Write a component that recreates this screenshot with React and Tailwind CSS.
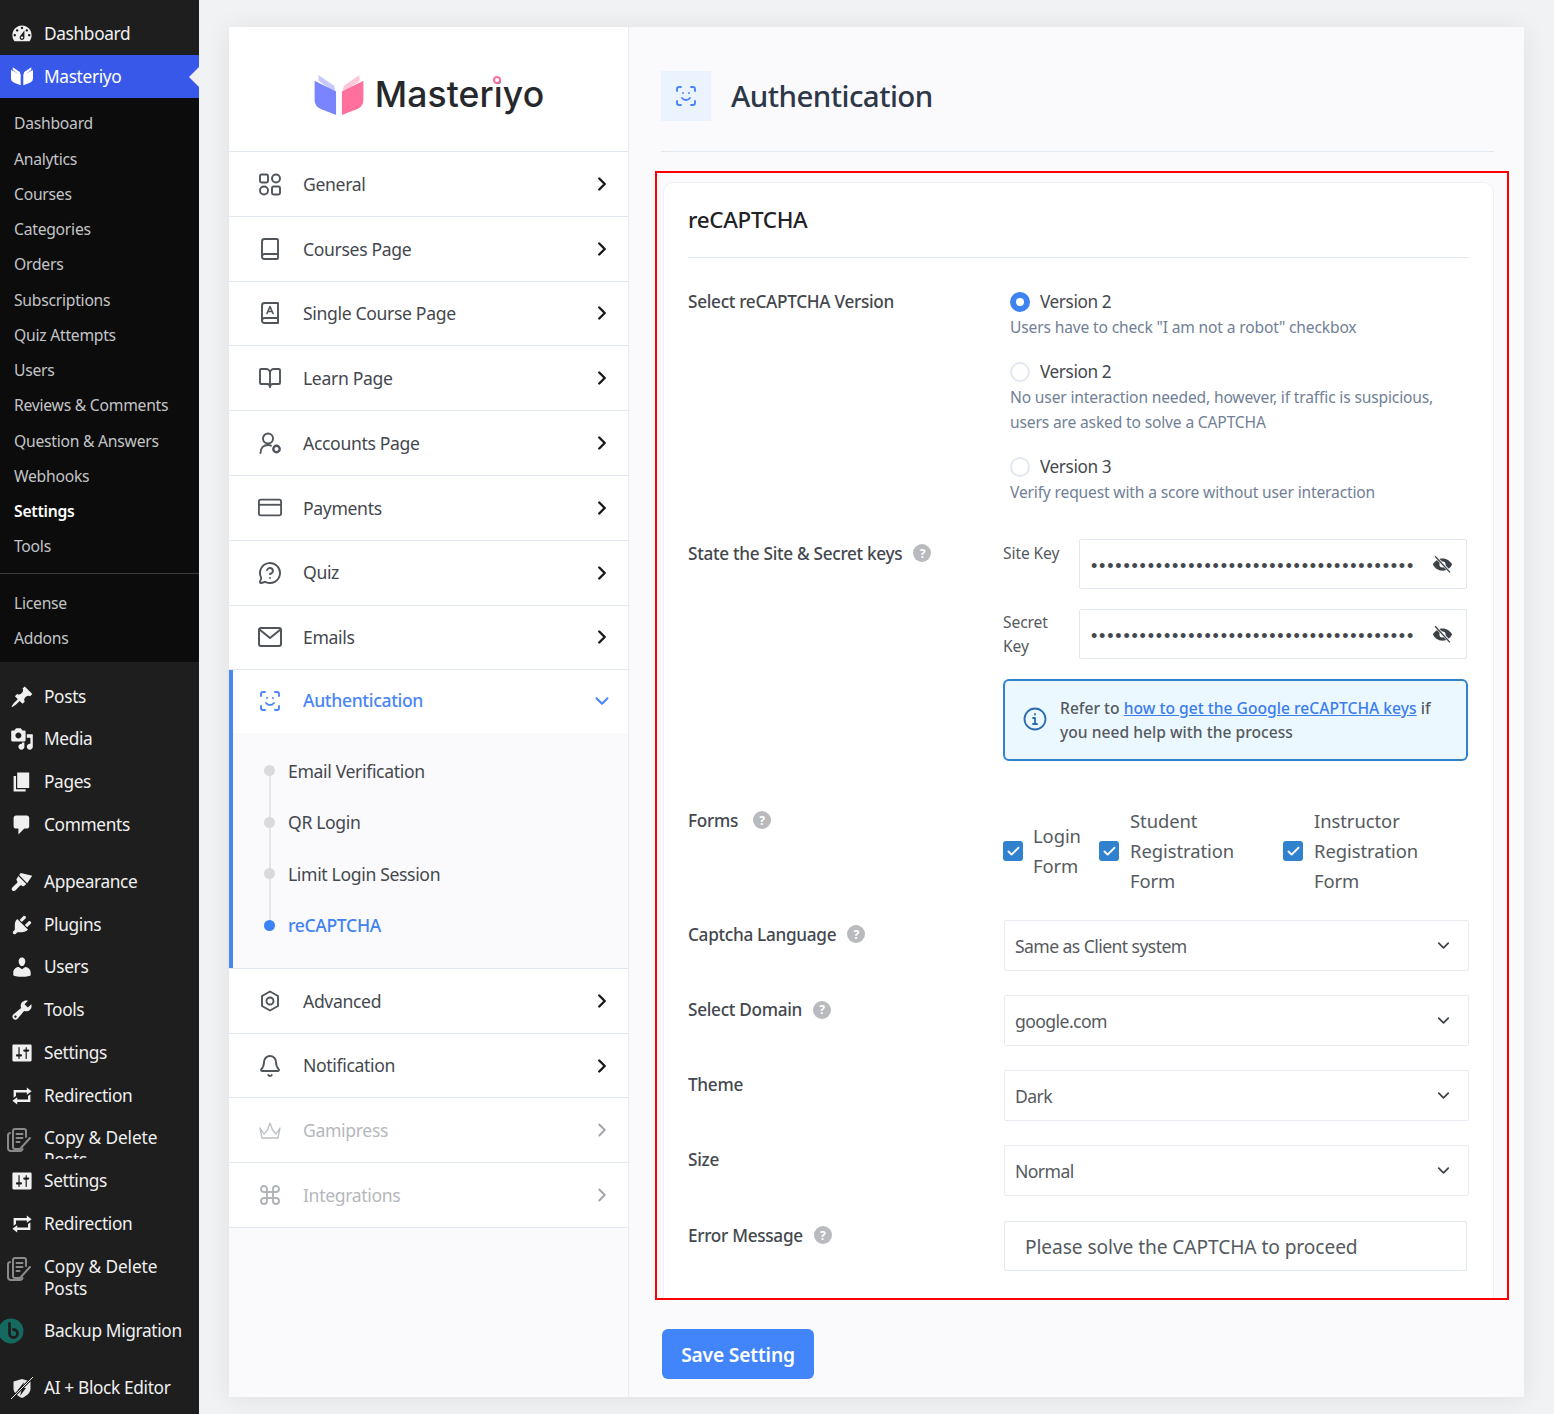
import React from "react";
import { ChevronRight, ChevronDown, Book, BookOpen, MessageCircleQuestion, Bell, Command, Check } from "lucide-react";

const Dash = ({ d, className = "w-[24px] h-[24px]" }) => (
  <svg viewBox="0 0 20 20" className={className} fill="currentColor"><path d={d} /></svg>
);
const D = {
  dashboard: "M3.76 16h12.48c1.1-1.37 1.76-3.11 1.76-5 0-4.42-3.58-8-8-8s-8 3.58-8 8c0 1.89.66 3.63 1.76 5zM10 4c.55 0 1 .45 1 1s-.45 1-1 1-1-.45-1-1 .45-1 1-1zM6 6c.55 0 1 .45 1 1s-.45 1-1 1-1-.45-1-1 .45-1 1-1zm8 0c.55 0 1 .45 1 1s-.45 1-1 1-1-.45-1-1 .45-1 1-1zm-5.37 5.55L12 7v6c0 1.1-.9 2-2 2s-2-.9-2-2c0-.57.24-1.08.63-1.45zM4 10c.55 0 1 .45 1 1s-.45 1-1 1-1-.45-1-1 .45-1 1-1zm12 0c.55 0 1 .45 1 1s-.45 1-1 1-1-.45-1-1 .45-1 1-1zm-5 3c0-.55-.45-1-1-1s-1 .45-1 1 .45 1 1 1 1-.45 1-1z",
  post: "M10.44 3.02l1.82-1.82 6.36 6.35-1.83 1.82c-1.05-.68-2.48-.57-3.41.36l-.75.75c-.92.93-1.04 2.35-.35 3.41l-1.83 1.82-2.41-2.41-2.8 2.79c-.42.42-3.38 2.71-3.8 2.29s1.86-3.39 2.28-3.81l2.79-2.79L4.1 9.36l1.83-1.82c1.05.69 2.48.57 3.4-.36l.75-.75c.93-.92 1.05-2.35.36-3.41z",
  media: "M13 11V4c0-.55-.45-1-1-1h-1.67L9 1H5L3.67 3H2c-.55 0-1 .45-1 1v7c0 .55.45 1 1 1h10c.55 0 1-.45 1-1zM7 4.5c1.38 0 2.5 1.12 2.5 2.5S8.38 9.5 7 9.5 4.5 8.38 4.5 7 5.62 4.5 7 4.5zM14 6h5v10.5c0 1.38-1.12 2.5-2.5 2.5S14 17.88 14 16.5s1.12-2.5 2.5-2.5c.17 0 .34.02.5.05V9h-3V6zm-4 8.05V13h2v3.5c0 1.38-1.12 2.5-2.5 2.5S7 17.88 7 16.5 8.12 14 9.5 14c.17 0 .34.02.5.05z",
  page: "M6 15V2h10v13H6zm-1 1h8v2H3V5h2v11z",
  comments: "M5 2h9c1.1 0 2 .9 2 2v7c0 1.1-.9 2-2 2h-2l-5 5v-5H5c-1.1 0-2-.9-2-2V4c0-1.1.9-2 2-2z",
  appearance: "M9 2.5l9.5 2.2-4.2 6.3L7.6 4.2zM6.9 4.9l6.7 6.8-1.6 1.5c-.6.6-1.4.4-2-.1-.5-.5-1.200-.4-1.700.1l-3.600 3.700c-.8.8-2 .9-2.800.1-.7-.8-.6-1.900.2-2.700l3.700-3.500c.5-.5.6-1.200.1-1.700-.6-.6-.8-1.400-.1-2z",
  plugins: "M13.11 4.36L9.87 7.6 8 5.73l3.24-3.24c.35-.34 1.05-.2 1.56.32.52.51.66 1.21.31 1.55zm-8 1.77l.91-1.12 9.01 9.01-1.19.84c-.71.71-2.63 1.16-3.82 1.16H6.14L4.9 17.26c-.59.59-1.54.59-2.12 0-.59-.58-.59-1.53 0-2.12l1.24-1.24v-3.88c0-1.13.4-3.19 1.09-3.89zm7.26 3.97l3.24-3.24c.34-.35 1.04-.21 1.55.31.52.51.66 1.21.31 1.55l-3.24 3.25z",
  users: "M10 9.25c-2.27 0-2.73-3.44-2.73-3.44C7 4.02 7.82 2 9.97 2c2.16 0 2.98 2.02 2.71 3.81 0 0-.41 3.44-2.68 3.44zm0 2.57L12.72 10c2.39 0 4.52 2.33 4.52 4.53v2.49s-3.65 1.13-7.24 1.13c-3.65 0-7.24-1.13-7.24-1.13v-2.49c0-2.25 1.94-4.48 4.47-4.48z",
  tools: "M16.68 9.77c-1.34 1.34-3.3 1.67-4.95.99l-5.41 6.52c-.99.99-2.59.99-3.58 0s-.99-2.59 0-3.57l6.52-5.42c-.68-1.65-.35-3.61.99-4.95 1.28-1.28 3.12-1.62 4.72-1.06l-2.89 2.89 2.82 2.82 2.86-2.87c.53 1.58.18 3.39-1.08 4.65zM3.81 16.21c.4.39 1.04.39 1.43 0 .4-.4.4-1.04 0-1.43-.39-.4-1.03-.4-1.43 0-.39.39-.39 1.03 0 1.43z",
  settings: "M18 16V4c0-.55-.45-1-1-1H3c-.55 0-1 .45-1 1v12c0 .55.45 1 1 1h14c.55 0 1-.45 1-1zM8 11h1c.55 0 1 .45 1 1s-.45 1-1 1H8v1.5c0 .28-.22.5-.5.5s-.5-.22-.5-.5V13H6c-.55 0-1-.45-1-1s.45-1 1-1h1V5.5c0-.28.22-.5.5-.5s.5.22.5.5V11zm5-2h-1c-.55 0-1-.45-1-1s.45-1 1-1h1V5.5c0-.28.22-.5.5-.5s.5.22.5.5V7h1c.55 0 1 .45 1 1s-.45 1-1 1h-1v5.5c0 .28-.22.5-.5.5s-.5-.22-.5-.5V9z",
  redirect: "M5 7v3l-2 1.5V5h11V3l4 3.01L14 9V7H5zm10 6v-3l2-1.5V15H6v2l-4-3.01L6 11v2h9z",
};

const BookLogo = ({ className, a = "#fff", b = "#fff", fa = "#fff", fb = "#fff" }) => (
  <svg viewBox="0 0 50 42" className={className}>
    <path d="M4 6 L4 0 L20 11 L22 19Z" fill={fa} />
    <path d="M46 6 L46 0 L30 11 L28 19Z" fill={fb} />
    <path d="M0 6 L22 17 V41 L7 35 Q0 32 0 26Z" fill={a} />
    <path d="M50 6 L28 17 V41 L43 35 Q50 32 50 26Z" fill={b} />
  </svg>
);

const CopyDel = () => (
  <svg viewBox="0 0 26 26" className="w-[26px] h-[26px]" fill="none" stroke="#8a8a8a" strokeWidth="2" strokeLinecap="round" strokeLinejoin="round">
    <path d="M7 20V4q0-2 2-2h9q2 0 2 2v6" />
    <path d="M4 6q-2 .500-2 2v13q0 3 3 3h9q2 0 2.500-2" />
    <path d="M10.500 7h6M10.500 11h6M10.500 15h3" />
    <path d="M7 20q0 2 2 2h5l10-11" />
  </svg>
);

const Backup = () => (
  <svg viewBox="0 0 26 26" className="w-[26px] h-[26px]" fill="none">
    <circle cx="12" cy="13" r="12.500" fill="#16695f" />
    <path d="M10.500 5.500v10a4 4 0 1 0 4-4" stroke="#1e1e1e" strokeWidth="2.800" strokeLinecap="round" />
  </svg>
);

const AiIcon = () => (
  <svg viewBox="0 0 24 24" className="w-[24px] h-[24px]">
    <path d="M12 3l8.500 2.500v7c0 4.500-4 7.500-8.500 9.500-4.500-2-8.500-5-8.500-9.500v-7z" fill="#e8e8e8" />
    <path d="M14 6l-6 8h3.500L10 20l6-8h-3.500z" fill="#1e1e1e" />
    <path d="M1 23L23 1" stroke="#1e1e1e" strokeWidth="2.500" />
    <path d="M1 23L23 1" stroke="#e8e8e8" strokeWidth="1" />
  </svg>
);

const WpText = ({ children }) => (
  <span className="text-[17.3px] leading-[22px] tracking-[-0.35px]">{children}</span>
);

const WpItem = ({ icon, children }) => (
  <div className="flex items-center h-[42.8px] shrink-0 text-[#f0f0f1]">
    <span className="w-[44px] shrink-0 flex justify-center text-[#f0f0f1]">{icon}</span>
    <WpText>{children}</WpText>
  </div>
);

const Sub = ({ children, bold }) => (
  <div className={`h-[35.25px] flex items-center pl-[14px] text-[15.7px] tracking-[-0.25px] ${bold ? "text-white font-semibold" : "text-[#c3c4c7]"}`}>{children}</div>
);

const Sidebar = () => (
  <aside className="w-[199px] h-[1414px] shrink-0 bg-[#1e1e1e] overflow-hidden pt-[12.5px]">
    <WpItem icon={<Dash d={D.dashboard} />}>Dashboard</WpItem>
    <div className="relative h-[43px] -mt-[0.3px] bg-[#3858e9] flex items-center text-white">
      <span className="w-[44px] flex justify-center"><BookLogo className="w-[22px] h-[19px]" /></span>
      <WpText>Masteriyo</WpText>
      <span className="absolute right-0 top-[12px] border-y-[10px] border-y-transparent border-r-[10px] border-r-[#f0f0f1]" />
    </div>
    <div className="bg-[#0c0c0c] h-[564px] pt-[8.5px]">
      {["Dashboard", "Analytics", "Courses", "Categories", "Orders", "Subscriptions", "Quiz Attempts", "Users", "Reviews & Comments", "Question & Answers", "Webhooks"].map((s) => <Sub key={s}>{s}</Sub>)}
      <Sub bold>Settings</Sub>
      <Sub>Tools</Sub>
      <div className="h-px bg-[#3c3c3c] mt-[8.5px] mb-[12px]" />
      <Sub>License</Sub>
      <Sub>Addons</Sub>
    </div>
    <div className="h-[13.2px]" />
    <WpItem icon={<Dash d={D.post} />}>Posts</WpItem>
    <WpItem icon={<Dash d={D.media} />}>Media</WpItem>
    <WpItem icon={<Dash d={D.page} />}>Pages</WpItem>
    <WpItem icon={<Dash d={D.comments} />}>Comments</WpItem>
    <div className="h-[14px]" />
    <WpItem icon={<Dash d={D.appearance} />}>Appearance</WpItem>
    <WpItem icon={<Dash d={D.plugins} />}>Plugins</WpItem>
    <WpItem icon={<Dash d={D.users} />}>Users</WpItem>
    <WpItem icon={<Dash d={D.tools} />}>Tools</WpItem>
    <WpItem icon={<Dash d={D.settings} />}>Settings</WpItem>
    <WpItem icon={<Dash d={D.redirect} />}>Redirection</WpItem>
    <div className="h-[42.3px] overflow-hidden flex items-start pt-[10px] text-[#f0f0f1]">
      <span className="w-[44px] shrink-0 flex justify-center -ml-[3px] mr-[3px]"><CopyDel /></span>
      <span className="text-[17.3px] leading-[22px] tracking-[-0.1px]">Copy &amp; Delete<br />Posts</span>
    </div>
    <WpItem icon={<Dash d={D.settings} />}>Settings</WpItem>
    <WpItem icon={<Dash d={D.redirect} />}>Redirection</WpItem>
    <div className="h-[64.5px] flex items-start pt-[11px] text-[#f0f0f1]">
      <span className="w-[44px] shrink-0 flex justify-center -ml-[3px] mr-[3px]"><CopyDel /></span>
      <span className="text-[17.3px] leading-[22px] tracking-[-0.1px]">Copy &amp; Delete<br />Posts</span>
    </div>
    <div className="h-[43px] flex items-center text-[#f0f0f1]">
      <span className="w-[44px] shrink-0 flex justify-start -ml-[1px] mr-[1px]"><Backup /></span>
      <WpText>Backup Migration</WpText>
    </div>
    <div className="h-[14.500px]" />
    <WpItem icon={<AiIcon />}>AI + Block Editor</WpItem>
  </aside>
);

const Ico = ({ children, className = "text-[#50555b]", sw = "1.9" }) => (
  <svg viewBox="0 0 24 24" className={`w-[24px] h-[24px] ${className}`} fill="none" stroke="currentColor" strokeWidth={sw} strokeLinecap="round" strokeLinejoin="round">{children}</svg>
);
const Face = ({ className }) => (
  <Ico className={className}>
    <path d="M3 7V5a2 2 0 0 1 2-2h2M17 3h2a2 2 0 0 1 2 2v2M21 17v2a2 2 0 0 1-2 2h-2M7 21H5a2 2 0 0 1-2-2v-2" />
    <path d="M8 14s1.500 2 4 2 4-2 4-2" />
    <path d="M9 9h.01M15 9h.01" />
  </Ico>
);
const icons = {
  general: <Ico><rect x="2" y="2.500" width="8" height="8" rx="1.500" /><circle cx="18" cy="6.500" r="4" /><circle cx="6" cy="18.500" r="4" /><rect x="14" y="14.500" width="8" height="8" rx="1.500" /></Ico>,
  courses: <Book size={24} strokeWidth={1.9} className="text-[#50555b]" />,
  single: <Ico><path d="M4 19.500v-15A2.500 2.500 0 0 1 6.500 2H20v20H6.500a2.500 2.500 0 0 1-2.500-2.500z" /><path d="M4 19.500A2.500 2.500 0 0 1 6.500 17H20" /><path d="M9 12.500l3-7 3 7M10 10.500h4" strokeWidth="1.600" /></Ico>,
  learn: <BookOpen size={24} strokeWidth={1.9} className="text-[#50555b]" />,
  accounts: <Ico><circle cx="10" cy="7.500" r="5" /><path d="M2.500 22c0-5 3-8 7.500-8 1.200 0 2 .200 3 .600" /><circle cx="18.500" cy="18" r="3.200" strokeWidth="2.400" /></Ico>,
  payments: <svg viewBox="0 0 26 20" className="w-[26px] h-[20px] text-[#50555b]" fill="none" stroke="currentColor" strokeWidth="2"><rect x="1" y="1" width="24" height="17" rx="2" /><path d="M1 6.500h24" /></svg>,
  quiz: <MessageCircleQuestion size={24} strokeWidth={1.9} className="text-[#50555b]" />,
  emails: <svg viewBox="0 0 24 20" className="w-[24px] h-[20px] text-[#50555b]" fill="none" stroke="currentColor" strokeWidth="2" strokeLinejoin="round"><rect x="1" y="1" width="22" height="18" rx="2" /><path d="M1.500 2.500L12 11l10.500-8.500" /></svg>,
  auth: <Face className="text-[#4a85f6]" />,
  advanced: <Ico><path d="M12 2.500l8 4.500v10l-8 4.500-8-4.500V7z" /><circle cx="12" cy="12" r="3.500" /></Ico>,
  notify: <Bell size={24} strokeWidth={1.9} className="text-[#50555b]" />,
  gami: <Ico className="text-[#bcc0c4]" sw="1.300"><path d="M2 10l4 6 3.500-4L12 5l2.500 7 3.500 4 4-6-2 10H4z" /></Ico>,
  integ: <Command size={24} strokeWidth={1.9} className="text-[#b0b4b8]" />,
};

const NavRow = ({ icon, label, muted }) => (
  <div className="h-[64.8px] flex items-center border-b border-[#e2e8f0] bg-white">
    <span className="w-[24px] ml-[29px] mr-[21px] flex justify-center shrink-0">{icon}</span>
    <span className={`flex-1 text-[17.6px] tracking-[-0.35px] ${muted ? "text-[#b5b8bc]" : "text-[#44484e]"}`}>{label}</span>
    <ChevronRight size={22} strokeWidth={muted ? 2 : 2.6} className={`mr-[15px] ${muted ? "text-[#a0a4a8]" : "text-[#16181b]"}`} />
  </div>
);

const SubNav = ({ children, active, last }) => (
  <div className="relative h-[51.4px] flex items-center pl-[55px]">
    {!last && <span className="absolute left-[36px] top-[25px] h-[52px] w-[1.5px] bg-[#e2e5ea]" />}
    <span className={`absolute left-[31px] top-[20px] w-[11px] h-[11px] rounded-full ${active ? "bg-[#3b82f6]" : "bg-[#d8dade]"}`} />
    <span className={`text-[17.6px] tracking-[-0.35px] ${active ? "text-[#3f83f0] font-medium" : "text-[#44484e]"}`}>{children}</span>
  </div>
);

const LeftNav = () => (
  <nav className="w-[400px] shrink-0 border-r border-[#e8ebf0] bg-[#fafafc]">
    <div className="h-[125px] bg-white border-b border-[#e2e8f0] flex items-center justify-center pl-[1px] pt-[12px]">
      <BookLogo className="w-[50px] h-[41px] mr-[11px]" a="#7b84ff" b="#ff709c" fa="#c6caff" fb="#ffc6d7" />
      <span className="relative text-[35.5px] leading-none font-medium tracking-[0.1px] text-[#27282c] font-['Inter',sans-serif]">
        Masteriyo
        <span className="absolute left-[118px] top-[-1px] w-[8px] h-[8px] rounded-full bg-white border-2 border-[#ff709c]" />
      </span>
    </div>
    <NavRow icon={icons.general} label="General" />
    <NavRow icon={icons.courses} label="Courses Page" />
    <NavRow icon={icons.single} label="Single Course Page" />
    <NavRow icon={icons.learn} label="Learn Page" />
    <NavRow icon={icons.accounts} label="Accounts Page" />
    <NavRow icon={icons.payments} label="Payments" />
    <NavRow icon={icons.quiz} label="Quiz" />
    <NavRow icon={icons.emails} label="Emails" />
    <div className="border-l-4 border-[#4a85f6] h-[297.5px]">
      <div className="h-[62.5px] bg-white flex items-center pb-[2px]">
        <span className="w-[24px] ml-[25px] mr-[21px] flex justify-center shrink-0">{icons.auth}</span>
        <span className="flex-1 text-[17.6px] font-medium tracking-[-0.35px] text-[#4a85f6]">Authentication</span>
        <ChevronDown size={22} strokeWidth={2.2} className="mr-[15px] text-[#4a85f6]" />
      </div>
      <div className="pt-[12.5px]">
        <SubNav>Email Verification</SubNav>
        <SubNav>QR Login</SubNav>
        <SubNav>Limit Login Session</SubNav>
        <SubNav active last>reCAPTCHA</SubNav>
      </div>
    </div>
    <div className="border-t border-[#e2e8f0]">
      <NavRow icon={icons.advanced} label="Advanced" />
      <NavRow icon={icons.notify} label="Notification" />
      <NavRow icon={icons.gami} label="Gamipress" muted />
      <NavRow icon={icons.integ} label="Integrations" muted />
    </div>
  </nav>
);

const Help = ({ gap = "ml-[11px]" }) => (
  <span className={`inline-flex items-center justify-center w-[18px] h-[18px] rounded-full bg-[#b8babd] text-white text-[12px] font-bold shrink-0 ${gap}`}>?</span>
);

const Label = ({ children, help, gap, className = "" }) => (
  <div className={`w-[315px] shrink-0 flex items-center text-[17.2px] leading-[25px] tracking-[-0.3px] font-medium text-[#44484e] ${className}`}>
    <span>{children}</span>{help && <Help gap={gap} />}
  </div>
);

const Radio = ({ on }) => on ? (
  <span className="w-[20px] h-[20px] rounded-full bg-[#3f83f0] flex items-center justify-center shrink-0"><span className="w-[8px] h-[8px] rounded-full bg-white" /></span>
) : (
  <span className="w-[20px] h-[20px] rounded-full border-2 border-[#e2e8f0] bg-white shrink-0" />
);

const Opt = ({ on, title, children, className = "" }) => (
  <div className={className}>
    <div className="flex items-center h-[25px]">
      <Radio on={on} />
      <span className="ml-[10px] text-[17.2px] tracking-[-0.4px] text-[#44484e]">{title}</span>
    </div>
    <p className="text-[15.6px] leading-[25px] tracking-[-0.16px] text-[#718096] translate-y-[1px]">{children}</p>
  </div>
);

const KeyInput = () => (
  <div className="w-[388px] h-[50px] border border-[#e2e8f0] rounded-[2px] bg-white flex items-center pl-[11px] pr-[13px]">
    <span className="w-[325px] shrink-0 h-[26px] leading-[26px] pt-[2px] overflow-hidden whitespace-nowrap text-[#44484e] text-[18px] tracking-[1.8px] font-['Liberation_Sans',sans-serif]">{"•".repeat(40)}</span>
    <svg viewBox="0 0 24 24" className="w-[21px] h-[21px] ml-[16px] text-[#3d4248]" fill="currentColor">
      <path d="M12 5C7 5 3 8 1 12c2 4 6 7 11 7s9-3 11-7c-2-4-6-7-11-7z" />
      <circle cx="12" cy="12" r="3.500" fill="#fff" />
      <path d="M4 3l17 18" stroke="#fff" strokeWidth="3.200" />
      <path d="M3.500 2.500l17 18.500" stroke="#3d4248" strokeWidth="1.500" />
    </svg>
  </div>
);

const Cb = () => (
  <span className="w-[20px] h-[20px] rounded-[3px] bg-[#3182ce] flex items-center justify-center shrink-0"><Check size={15} strokeWidth={3} className="text-white" /></span>
);

const CbLabel = ({ lines, w, gap = "ml-[10px]" }) => (
  <div className={`flex items-center ${w}`}>
    <Cb />
    <span className={`${gap} text-[18.4px] leading-[30px] tracking-[-0.05px] text-[#555a60]`}>
      {lines.map((l, i) => <div key={i}>{l}</div>)}
    </span>
  </div>
);

const Select = ({ children }) => (
  <div className="ml-[1px] w-[465px] h-[51px] border border-[#e8ecf2] rounded-[2px] bg-white flex items-center pl-[10px] pr-[15px]">
    <span className="flex-1 text-[17.6px] tracking-[-0.58px] text-[#555a60] translate-y-[1px]">{children}</span>
    <ChevronDown size={19} strokeWidth={2.2} className="text-[#3d4248]" />
  </div>
);

const Main = () => (
  <section className="flex-1 px-[32px] pt-[44px]">
    <header className="flex items-center pb-[30px] border-b border-[#e2e8f0]">
      <span className="w-[50px] h-[50px] bg-[#ebf3ff] flex items-center justify-center"><Face className="text-[#4a85f6]" /></span>
      <h1 className="ml-[20px] text-[29.5px] leading-[50px] font-medium text-[#2d3748] tracking-[-0.55px]">Authentication</h1>
    </header>
    <div className="mt-[19px] -ml-[6px] -mr-[15px] border-2 border-[#f00] pl-[6px] pr-[13px] pt-[9px] h-[1129px] overflow-hidden">
      <div className="h-[1130px] bg-white border border-[#eef0f4] rounded-[10px] px-[24px]">
        <h2 className="h-[75px] flex items-center border-b border-[#e2e8f0] text-[22.4px] font-medium tracking-[-0.3px] text-[#1f2226]">reCAPTCHA</h2>
        <div className="flex pt-[31px]">
          <Label className="h-[25px]">Select reCAPTCHA Version</Label>
          <div className="pl-[7px] flex-1">
            <Opt on title="Version 2">Users have to check "I am not a robot" checkbox</Opt>
            <Opt title="Version 2" className="mt-[20px]">No user interaction needed, however, if traffic is suspicious,<br />users are asked to solve a CAPTCHA</Opt>
            <Opt title="Version 3" className="mt-[20px]">Verify request with a score without user interaction</Opt>
          </div>
        </div>
        <div className="flex mt-[35px]">
          <Label className="h-[25px] mt-[1.500px]" help>State the Site &amp; Secret keys</Label>
          <div className="flex-1">
            <div className="flex">
              <span className="w-[76px] text-[15.6px] leading-[24px] pt-[2px] tracking-[-0.1px] text-[#555a60]">Site Key</span>
              <KeyInput />
            </div>
            <div className="flex mt-[20px]">
              <span className="w-[76px] text-[15.6px] leading-[24px] pt-[1px] tracking-[-0.1px] text-[#555a60]">Secret<br />Key</span>
              <KeyInput />
            </div>
            <div className="mt-[20px] w-[465px] h-[82px] border-2 border-[#3182ce] rounded-[6px] bg-[#ebf8ff] flex items-center">
              <svg viewBox="0 0 24 24" className="w-[24px] h-[24px] ml-[17.5px] mr-[13.5px] -mt-[2px] shrink-0 text-[#2b6cb0]" fill="none" stroke="currentColor" strokeWidth="1.800" strokeLinecap="round" strokeLinejoin="round">
                <circle cx="12" cy="12" r="10.500" />
                <path d="M12 7v.5M10 11h2v6M10 17h4" />
              </svg>
              <p className="text-[15.6px] leading-[24px] tracking-[0.02px] font-medium text-[#555a60]">
                Refer to <a className="text-[#3b7cf0] underline">how to get the Google reCAPTCHA keys</a> if<br />you need help with the process
              </p>
            </div>
          </div>
        </div>
        <div className="flex mt-[45px]">
          <Label className="h-[25px] mt-[1.500px]" help gap="ml-[15px]">Forms</Label>
          <div className="flex-1 flex">
            <CbLabel lines={["Login", "Form"]} w="w-[96px]" />
            <CbLabel lines={["Student", "Registration", "Form"]} w="w-[184px]" gap="ml-[11px]" />
            <CbLabel lines={["Instructor", "Registration", "Form"]} gap="ml-[11px]" />
          </div>
        </div>
        <div className="flex mt-[24px]">
          <Label className="h-[25px] mt-[1.500px]" help>Captcha Language</Label>
          <Select>Same as Client system</Select>
        </div>
        <div className="flex mt-[24px]">
          <Label className="h-[25px] mt-[2px]" help>Select Domain</Label>
          <Select>google.com</Select>
        </div>
        <div className="flex mt-[24px]">
          <Label className="h-[25px] mt-[1.500px]">Theme</Label>
          <Select>Dark</Select>
        </div>
        <div className="flex mt-[24px]">
          <Label className="h-[25px] mt-[1.500px]">Size</Label>
          <Select>Normal</Select>
        </div>
        <div className="flex mt-[25px]">
          <Label className="h-[25px] mt-[1.500px]" help>Error Message</Label>
          <div className="ml-[1px] w-[463px] h-[50px] border border-[#e2e8f0] rounded-[2px] bg-white flex items-center pl-[20px] text-[19.200px] tracking-[-0.1px] text-[#555a60] pt-[2px]">Please solve the CAPTCHA to proceed</div>
        </div>
      </div>
    </div>
    <button className="mt-[29px] ml-[1px] w-[152px] h-[50px] rounded-[6px] bg-[#4285fa] text-white text-[19.200px] font-semibold tracking-[-0.15px] pt-[2px]">Save Setting</button>
  </section>
);

export default function App() {
  return (
    <div className="flex w-[1554px] h-[1414px] overflow-hidden bg-[#f0f2f4] font-['Noto_Sans','Open_Sans',sans-serif]">
      <Sidebar />
      <div className="flex-1 pl-[30px] pr-[30px] pt-[27px]">
        <div className="flex w-[1295px] h-[1370px] bg-[#fafafc] shadow-[0_2px_24px_rgba(0,0,0,0.08)]">
          <LeftNav />
          <Main />
        </div>
      </div>
    </div>
  );
}
